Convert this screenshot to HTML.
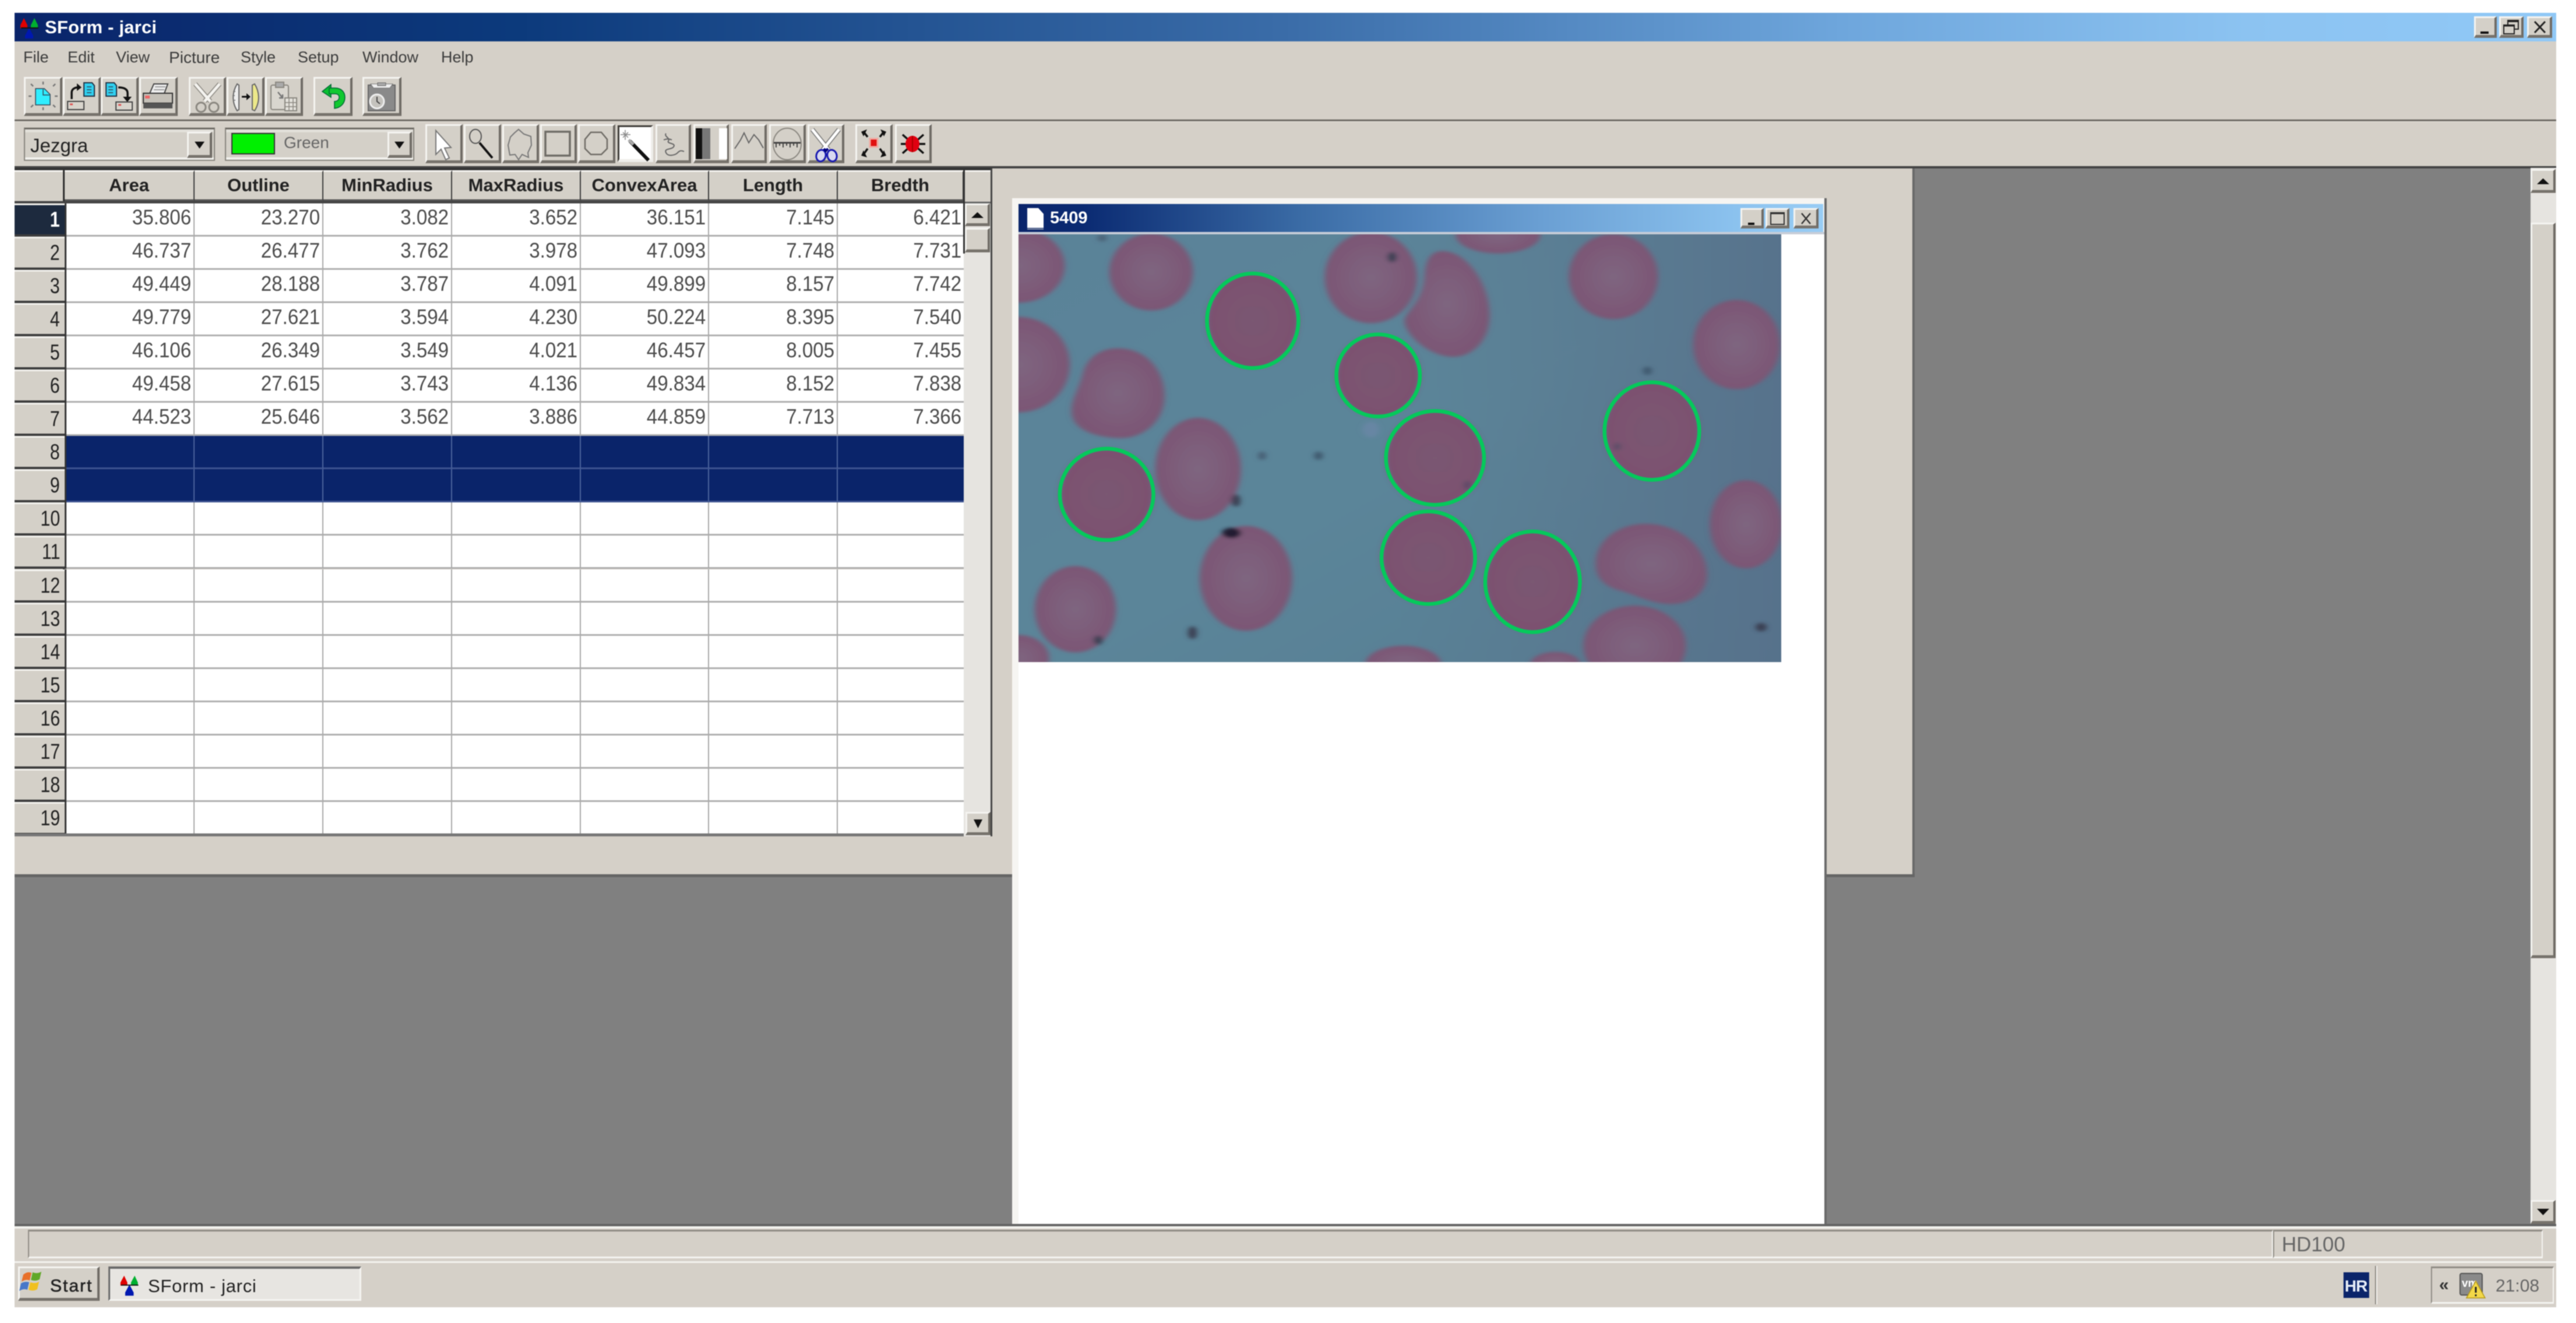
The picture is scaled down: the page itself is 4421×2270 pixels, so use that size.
<!DOCTYPE html>
<html><head><meta charset="utf-8"><title>SForm - jarci</title>
<style>
html,body{margin:0;padding:0;width:4421px;height:2270px;background:#fff;overflow:hidden}
#p{position:absolute;left:0;top:0;width:4421px;height:2270px;filter:blur(.9px);font-family:"Liberation Sans",sans-serif;overflow:hidden}
.a{position:absolute}
.t{position:absolute;white-space:nowrap;line-height:1}
.b{position:absolute;box-sizing:border-box;background:#d4d0c8;border:3px solid;border-color:#f5f4f1 #6f6b65 #77736c #f5f4f1;border-bottom-width:5px;border-right-width:4px}
.b svg{position:absolute;left:-3px;top:-3px;overflow:visible}
.r{position:absolute;left:25px;width:1629px;height:57px;display:flex}
.r b{box-sizing:border-box;width:86px;height:57px;background:#d4d0c8;border-top:3px solid #f3f2ee;border-bottom:4px solid #3d3d3d;font:400 37px/50px "Liberation Sans",sans-serif;text-align:right;padding-right:8px;color:#222}
.r b i{display:inline-block;font-style:normal;transform:scaleX(.82);transform-origin:right center}
.r u{box-sizing:border-box;width:3px;height:57px;background:#333;display:block}
.r span{box-sizing:border-box;display:block;height:57px;background:#fff;border-right:2px solid #a8a8a8;border-bottom:3px solid #afafaf;text-align:right;padding-right:4px;font:36px/47px "Liberation Sans",sans-serif;color:#4c4c4c;overflow:hidden;white-space:nowrap}
.r span i{display:inline-block;font-style:normal;transform:scaleX(.92);transform-origin:right center}
.r span:nth-of-type(1){width:220px}
.r span:nth-of-type(2),.r span:nth-of-type(3),.r span:nth-of-type(4){width:221px}
.r span:nth-of-type(5){width:220px}
.r span:nth-of-type(6){width:221px}
.r span:nth-of-type(7){width:216px;border-right:0}
.s span{background:#0a246a;border-right-color:#4b639c;border-bottom-color:#3d5390}
.h{position:absolute;top:292px;height:54px;box-sizing:border-box;background:#d4d0c8;border-top:3px solid #f3f2ee;border-right:2px solid #3c3c3c;border-bottom:4px solid #555;font:700 31px/46px "Liberation Sans",sans-serif;color:#222;text-align:center}
</style></head><body><div id="p">

<!-- main window -->
<div class="a" style="left:25px;top:22px;width:4362px;height:2221px;background:#d5d0c8"></div>
<div class="a" style="left:25px;top:22px;width:4362px;height:49px;background:linear-gradient(90deg,#0a246a 0%,#0c3a7c 20%,#3a6ca8 50%,#6ea6dc 72%,#8cc3f1 88%,#90c8f6 100%)"></div>
<svg class="a" style="left:32px;top:26px" width="40" height="42" viewBox="0 0 40 42"><path d="M9 5l6 12v6H3v-6z" fill="#e00000"/><path d="M27 5l6 12v6H21v-6z" fill="#00b030"/><path d="M18 22l7 13v5H11v-5z" fill="#0018b0"/><path d="M4 22h30" stroke="#111" stroke-width="2"/></svg>
<div class="t" style="left:77px;top:31px;font-size:31px;font-weight:700;color:#fff;letter-spacing:.2px">SForm - jarci</div>
<div class="b" style="left:4246px;top:28px;width:39px;height:37px"><svg width="39" height="37"><path d="M11 28h14" stroke="#111" stroke-width="4"/></svg></div>
<div class="b" style="left:4289px;top:28px;width:42px;height:37px"><svg width="42" height="37"><rect x="15" y="7" width="18" height="15" fill="none" stroke="#222" stroke-width="2"/><path d="M15 8h18" stroke="#222" stroke-width="4"/><rect x="8" y="15" width="18" height="15" fill="#d4d0c8" stroke="#222" stroke-width="2"/><path d="M8 16h18" stroke="#222" stroke-width="3"/></svg></div>
<div class="b" style="left:4337px;top:28px;width:43px;height:37px"><svg width="43" height="37"><path d="M13 9l18 19M31 9L13 28" stroke="#222" stroke-width="3"/></svg></div>

<!-- menu -->
<div class="t" style="left:40px;top:85px;font-size:27px;color:#3c3c3c">File</div>
<div class="t" style="left:116px;top:85px;font-size:27px;color:#3c3c3c">Edit</div>
<div class="t" style="left:199px;top:85px;font-size:27px;color:#3c3c3c">View</div>
<div class="t" style="left:290px;top:85px;font-size:28px;color:#3c3c3c">Picture</div>
<div class="t" style="left:413px;top:85px;font-size:27px;color:#3c3c3c">Style</div>
<div class="t" style="left:511px;top:85px;font-size:27px;color:#3c3c3c">Setup</div>
<div class="t" style="left:622px;top:85px;font-size:27px;color:#3c3c3c">Window</div>
<div class="t" style="left:757px;top:85px;font-size:27px;color:#3c3c3c">Help</div>

<!-- toolbar 1 -->
<div class="b" style="left:41px;top:132px;width:66px;height:67px"><svg width="66" height="67"><path d="M20 20h15l10 10v18H20z" fill="#30eeff" stroke="#345" stroke-width="1.500"/><path d="M33 21v10h11" fill="none" stroke="#345" stroke-width="1.500"/><path d="M33 8v5M33 52v5M12 12l4 4M54 12l-4 4M12 52l4-4M54 52l-4-4M8 33h5M53 33h5" stroke="#777" stroke-width="2.500"/></svg></div>
<div class="b" style="left:108px;top:132px;width:65px;height:67px"><svg width="65" height="67"><path d="M36 10h14l4 5v18H36z" fill="#30d0f0" stroke="#234" stroke-width="2"/><path d="M41 17h8M41 22h8M41 27h8" stroke="#345" stroke-width="1.500"/><path d="M15 38V27c0-6 5-9 11-9" fill="none" stroke="#111" stroke-width="3.500"/><path d="M24 11l8 7-8 6z" fill="#111"/><rect x="8" y="42" width="28" height="14" fill="#d8d4cc" stroke="#444" stroke-width="2"/><path d="M12 47h5" stroke="#d55" stroke-width="3"/></svg></div>
<div class="b" style="left:173px;top:132px;width:65px;height:67px"><svg width="65" height="67"><path d="M9 10h14l4 5v18H9z" fill="#30d0f0" stroke="#234" stroke-width="2"/><path d="M13 17h8M13 22h8M13 27h8" stroke="#345" stroke-width="1.500"/><path d="M30 18c10 0 16 3 16 10v8" fill="none" stroke="#111" stroke-width="3.500"/><path d="M38 34h15l-7.500 9z" fill="#111"/><rect x="26" y="43" width="28" height="14" fill="#d8d4cc" stroke="#444" stroke-width="2"/><path d="M30 48h5" stroke="#d55" stroke-width="3"/></svg></div>
<div class="b" style="left:239px;top:132px;width:66px;height:67px"><svg width="66" height="67"><path d="M18 28l7-16h24l-6 16z" fill="#eee" stroke="#444" stroke-width="2"/><path d="M27 17h18M25 22h18" stroke="#888" stroke-width="1.500"/><rect x="7" y="28" width="50" height="17" fill="#c4c0b8" stroke="#333" stroke-width="2"/><rect x="7" y="45" width="50" height="9" fill="#555"/><rect x="10" y="32" width="8" height="5" fill="#e66"/></svg></div>
<div class="b" style="left:324px;top:132px;width:64px;height:67px"><svg width="64" height="67"><path d="M11 12l26 30M53 12L27 42" stroke="#8a8780" stroke-width="8"/><path d="M11 12l26 30M53 12L27 42" stroke="#f4f3ef" stroke-width="5"/><ellipse cx="21" cy="52" rx="8" ry="8" fill="none" stroke="#8a8780" stroke-width="3"/><ellipse cx="43" cy="52" rx="8" ry="8" fill="none" stroke="#8a8780" stroke-width="3"/></svg></div>
<div class="b" style="left:389px;top:132px;width:65px;height:67px"><svg width="65" height="67"><path d="M18 12C10 25 8 42 18 58l3-2V14z" fill="#eee" stroke="#666" stroke-width="2"/><path d="M11 25h4M10 32h4M11 40h4" stroke="#777" stroke-width="1.500"/><path d="M48 12c8 13 10 30 0 46l-4-2V14z" fill="#ece88a" stroke="#666" stroke-width="2"/><path d="M26 34h10" stroke="#111" stroke-width="3"/><path d="M34 28l7 6-7 6z" fill="#111"/></svg></div>
<div class="b" style="left:455px;top:132px;width:65px;height:67px"><svg width="65" height="67"><rect x="10" y="14" width="30" height="42" rx="3" fill="#d9d6cf" stroke="#8a8780" stroke-width="2"/><rect x="18" y="9" width="14" height="9" fill="#aaa" stroke="#8a8780" stroke-width="2"/><path d="M22 26l8 10m0-6v6h-6" stroke="#777" stroke-width="2.500" fill="none"/><rect x="34" y="36" width="20" height="22" fill="#e4e2dc" stroke="#8a8780" stroke-width="2"/><path d="M41 36v22M48 36v22M34 44h20M34 51h20" stroke="#8a8780" stroke-width="1.500"/></svg></div>
<div class="b" style="left:538px;top:132px;width:67px;height:67px"><svg width="67" height="67"><path d="M30 13L15 25l15 10z" fill="#08c030" stroke="#063" stroke-width="1.500"/><path d="M27 19h10c11 0 17 7 17 16 0 11-8 18-18 19v-12c5 0 8-3 8-7 0-4-3-6-7-6H27z" fill="#10c830" stroke="#063" stroke-width="1.500"/></svg></div>
<div class="b" style="left:622px;top:132px;width:67px;height:67px"><svg width="67" height="67"><rect x="10" y="14" width="46" height="44" fill="#8a8a8a" stroke="#666" stroke-width="2"/><path d="M14 12h38l-5 7H19z" fill="#eee" stroke="#777"/><path d="M26 10h14v5H26z" fill="#aaa" stroke="#666"/><circle cx="25" cy="42" r="12" fill="#c4c2bd" stroke="#eee" stroke-width="3"/><path d="M25 34v8l5 4" stroke="#444" stroke-width="2" fill="none"/></svg></div>

<div class="a" style="left:25px;top:205px;width:4362px;height:3px;background:#6e6a64"></div>
<div class="a" style="left:25px;top:208px;width:4362px;height:1px;background:#e8e6e1"></div>

<!-- combos -->
<div class="a" style="left:41px;top:219px;width:328px;height:57px;box-sizing:border-box;border:2px solid #87847d;border-top:3px solid #6c6963;background:#d4d0c8;box-shadow:inset 0 5px 0 #e2e0da,inset 0 -4px 0 #f2f1ed"></div>
<div class="t" style="left:52px;top:233px;font-size:33px;color:#222">Jezgra</div>
<div class="b" style="left:321px;top:226px;width:43px;height:45px"><svg width="43" height="45"><path d="M13 17h17l-8.500 12z" fill="#111"/></svg></div>
<div class="a" style="left:386px;top:219px;width:325px;height:57px;box-sizing:border-box;border:2px solid #87847d;border-top:3px solid #6c6963;background:#d4d0c8;box-shadow:inset 0 5px 0 #e2e0da,inset 0 -4px 0 #f2f1ed"></div>
<div class="a" style="left:397px;top:228px;width:75px;height:37px;box-sizing:border-box;background:#00f000;border:2px solid #333"></div>
<div class="t" style="left:487px;top:231px;font-size:28px;color:#666">Green</div>
<div class="b" style="left:665px;top:226px;width:42px;height:45px"><svg width="42" height="45"><path d="M12 17h17l-8.500 12z" fill="#111"/></svg></div>

<!-- toolbar 2 -->
<div class="b" style="left:730px;top:213px;width:64px;height:67px"><svg width="64" height="67"><path d="M18 11v41l9-9 8 18 6-3-8-17 11-1z" fill="#fff" stroke="#777" stroke-width="2"/></svg></div>
<div class="b" style="left:796px;top:213px;width:64px;height:67px"><svg width="64" height="67"><ellipse cx="20" cy="21" rx="10" ry="12" fill="none" stroke="#555" stroke-width="2"/><path d="M27 32l22 26" stroke="#111" stroke-width="4"/></svg></div>
<div class="b" style="left:862px;top:213px;width:63px;height:67px"><svg width="63" height="67"><path d="M28 9l9 8 12 4 1 15-6 13 1 8-11-5-6 9-6-9-9 1-3-17 4-14 7-7z" fill="none" stroke="#777" stroke-width="2"/></svg></div>
<div class="b" style="left:927px;top:213px;width:63px;height:67px"><svg width="63" height="67"><rect x="9" y="13" width="42" height="41" fill="none" stroke="#6f6c66" stroke-width="3.500"/></svg></div>
<div class="b" style="left:992px;top:213px;width:64px;height:67px"><svg width="64" height="67"><path d="M22 14h18l10 12v16L40 52H22L12 42V26z" fill="none" stroke="#6f6c66" stroke-width="2.500"/></svg></div>
<div class="b" style="left:1060px;top:215px;width:61px;height:63px;background:#fff;border-color:#3e3b37 #efeeea #efeeea #3e3b37"><svg width="61" height="63"><path d="M9 12l9 9M18 12l-9 9M13 8v17M5 16h17" stroke="#888" stroke-width="1.500"/><path d="M21 27l32 33" stroke="#111" stroke-width="6"/><path d="M19 25l8 8" stroke="#aaa" stroke-width="5"/></svg></div>
<div class="b" style="left:1125px;top:213px;width:61px;height:67px"><svg width="61" height="67"><path d="M18 16c-4 5 8 8 4 13-3 5 14 3 9 10-3 5-17 2-13 10 3 7 16 5 21-1 3-3 6-3 10-1" fill="none" stroke="#666" stroke-width="2"/><path d="M14 27c5-2 10-2 14 0" stroke="#666" stroke-width="2" fill="none"/></svg></div>
<div class="b" style="left:1190px;top:213px;width:61px;height:67px"><svg width="61" height="67"><rect x="4" y="7" width="11" height="53" fill="#111"/><rect x="15" y="7" width="14" height="53" fill="#777"/><rect x="44" y="7" width="14" height="53" fill="#fff"/></svg></div>
<div class="b" style="left:1255px;top:213px;width:61px;height:67px"><svg width="61" height="67"><path d="M6 42l10-15 6-12 8 17 9-14 8 9 8 14" fill="none" stroke="#666" stroke-width="2"/></svg></div>
<div class="b" style="left:1320px;top:213px;width:63px;height:67px"><svg width="63" height="67"><ellipse cx="31" cy="34" rx="24" ry="27" fill="none" stroke="#8a8780" stroke-width="2"/><path d="M8 32h46" stroke="#444" stroke-width="3"/><path d="M12 32v8M18 32v5M24 32v8M30 32v5M36 32v8M42 32v5M48 32v8" stroke="#444" stroke-width="2"/></svg></div>
<div class="b" style="left:1386px;top:213px;width:63px;height:67px"><svg width="63" height="67"><path d="M8 9l28 35M54 9L26 44" stroke="#777" stroke-width="8"/><path d="M8 9l28 35M54 9L26 44" stroke="#fff" stroke-width="5"/><ellipse cx="23" cy="54" rx="8" ry="10" fill="#d8d8f0" stroke="#1818b0" stroke-width="3" transform="rotate(15 23 54)"/><ellipse cx="42" cy="54" rx="8" ry="10" fill="#d8d8f0" stroke="#1818b0" stroke-width="3" transform="rotate(-15 42 54)"/><path d="M28 42l3 4 4-4" stroke="#000080" stroke-width="4" fill="none"/></svg></div>
<div class="b" style="left:1468px;top:213px;width:64px;height:67px"><svg width="64" height="67"><rect x="25" y="25" width="13" height="14" fill="#e01010" stroke="#f0a8a0" stroke-width="3"/><path d="M21 22l-7-9M42 22l7-9M21 42l-7 10M42 42l7 10" stroke="#111" stroke-width="3.500"/><path d="M10 13l10-4-6 12zM53 13l-10-4 6 12zM10 54l10 3-6-12zM53 54l-10 3 6-12z" fill="#111"/></svg></div>
<div class="b" style="left:1536px;top:213px;width:63px;height:67px"><svg width="63" height="67"><path d="M13 18l36 32M49 18L13 50M10 34h42" stroke="#111" stroke-width="3.500"/><ellipse cx="30" cy="34" rx="12" ry="14" fill="#e00010"/><path d="M30 20v28" stroke="#a00" stroke-width="2"/></svg></div>

<!-- MDI client -->
<div class="a" style="left:25px;top:288px;width:4362px;height:1812px;background:#808080"></div>
<div class="a" style="left:25px;top:285px;width:4362px;height:4px;background:#444"></div>
<div class="a" style="left:25px;top:289px;width:3257px;height:1211px;background:#d5d0c8"></div>
<div class="a" style="left:3282px;top:289px;width:4px;height:1216px;background:#696969"></div>
<div class="a" style="left:25px;top:1500px;width:3261px;height:5px;background:#656565"></div>

<!-- MDI scrollbar -->
<div class="a" style="left:4343px;top:288px;width:44px;height:1812px;background:#e6e4e0"></div>
<div class="b" style="left:4343px;top:290px;width:43px;height:41px"><svg width="43" height="41"><path d="M11 26h21l-10.500-10z" fill="#111"/></svg></div>
<div class="b" style="left:4343px;top:382px;width:43px;height:1262px"></div>
<div class="b" style="left:4343px;top:2059px;width:43px;height:41px"><svg width="43" height="41"><path d="M11 15h21L21.500 26z" fill="#111"/></svg></div>

<!-- grid -->
<div class="a" style="left:25px;top:289px;width:1678px;height:146px;background:#d4d0c8"></div>
<div class="a" style="left:25px;top:288px;width:1678px;height:4px;background:#333"></div>
<div class="a" style="left:25px;top:292px;width:86px;height:54px;background:#d4d0c8;box-shadow:inset 0 3px 0 #f3f2ee"></div>
<div class="a" style="left:108px;top:292px;width:3px;height:1141px;background:#2b2b2b"></div>
<div class="h" style="left:111px;width:223px">Area</div>
<div class="h" style="left:334px;width:221px">Outline</div>
<div class="h" style="left:555px;width:221px">MinRadius</div>
<div class="h" style="left:776px;width:221px">MaxRadius</div>
<div class="h" style="left:997px;width:220px">ConvexArea</div>
<div class="h" style="left:1217px;width:221px">Length</div>
<div class="h" style="left:1438px;width:216px">Bredth</div>
<div class="a" style="left:25px;top:345px;width:1629px;height:4px;background:#444"></div>

<div class="r" style="top:349px"><b style="background:#1d2a3e;color:#fff;font-weight:700"><i>1</i></b><u></u><span><i>35.806</i></span><span><i>23.270</i></span><span><i>3.082</i></span><span><i>3.652</i></span><span><i>36.151</i></span><span><i>7.145</i></span><span><i>6.421</i></span></div>
<div class="r" style="top:406px"><b><i>2</i></b><u></u><span><i>46.737</i></span><span><i>26.477</i></span><span><i>3.762</i></span><span><i>3.978</i></span><span><i>47.093</i></span><span><i>7.748</i></span><span><i>7.731</i></span></div>
<div class="r" style="top:463px"><b><i>3</i></b><u></u><span><i>49.449</i></span><span><i>28.188</i></span><span><i>3.787</i></span><span><i>4.091</i></span><span><i>49.899</i></span><span><i>8.157</i></span><span><i>7.742</i></span></div>
<div class="r" style="top:520px"><b><i>4</i></b><u></u><span><i>49.779</i></span><span><i>27.621</i></span><span><i>3.594</i></span><span><i>4.230</i></span><span><i>50.224</i></span><span><i>8.395</i></span><span><i>7.540</i></span></div>
<div class="r" style="top:577px"><b><i>5</i></b><u></u><span><i>46.106</i></span><span><i>26.349</i></span><span><i>3.549</i></span><span><i>4.021</i></span><span><i>46.457</i></span><span><i>8.005</i></span><span><i>7.455</i></span></div>
<div class="r" style="top:634px"><b><i>6</i></b><u></u><span><i>49.458</i></span><span><i>27.615</i></span><span><i>3.743</i></span><span><i>4.136</i></span><span><i>49.834</i></span><span><i>8.152</i></span><span><i>7.838</i></span></div>
<div class="r" style="top:691px"><b><i>7</i></b><u></u><span><i>44.523</i></span><span><i>25.646</i></span><span><i>3.562</i></span><span><i>3.886</i></span><span><i>44.859</i></span><span><i>7.713</i></span><span><i>7.366</i></span></div>
<div class="r s" style="top:748px"><b><i>8</i></b><u></u><span></span><span></span><span></span><span></span><span></span><span></span><span></span></div>
<div class="r s" style="top:805px"><b><i>9</i></b><u></u><span></span><span></span><span></span><span></span><span></span><span></span><span></span></div>
<div class="r" style="top:862px"><b><i>10</i></b><u></u><span></span><span></span><span></span><span></span><span></span><span></span><span></span></div>
<div class="r" style="top:919px"><b><i>11</i></b><u></u><span></span><span></span><span></span><span></span><span></span><span></span><span></span></div>
<div class="r" style="top:977px"><b><i>12</i></b><u></u><span></span><span></span><span></span><span></span><span></span><span></span><span></span></div>
<div class="r" style="top:1034px"><b><i>13</i></b><u></u><span></span><span></span><span></span><span></span><span></span><span></span><span></span></div>
<div class="r" style="top:1091px"><b><i>14</i></b><u></u><span></span><span></span><span></span><span></span><span></span><span></span><span></span></div>
<div class="r" style="top:1148px"><b><i>15</i></b><u></u><span></span><span></span><span></span><span></span><span></span><span></span><span></span></div>
<div class="r" style="top:1205px"><b><i>16</i></b><u></u><span></span><span></span><span></span><span></span><span></span><span></span><span></span></div>
<div class="r" style="top:1262px"><b><i>17</i></b><u></u><span></span><span></span><span></span><span></span><span></span><span></span><span></span></div>
<div class="r" style="top:1319px"><b><i>18</i></b><u></u><span></span><span></span><span></span><span></span><span></span><span></span><span></span></div>
<div class="r" style="top:1376px"><b><i>19</i></b><u></u><span></span><span></span><span></span><span></span><span></span><span></span><span></span></div>
<div class="a" style="left:25px;top:1430px;width:1678px;height:5px;background:#777"></div>

<!-- grid scrollbar -->
<div class="a" style="left:1654px;top:292px;width:49px;height:1143px;background:#e6e4e0"></div>
<div class="a" style="left:1654px;top:292px;width:49px;height:54px;background:#d4d0c8;box-shadow:inset 0 3px 0 #f3f2ee"></div>
<div class="a" style="left:1654px;top:346px;width:49px;height:3px;background:#666"></div>
<div class="a" style="left:1653px;top:289px;width:3px;height:146px;background:#333"></div>
<div class="a" style="left:1700px;top:289px;width:3px;height:1146px;background:#444"></div>
<div class="b" style="left:1656px;top:349px;width:43px;height:39px"><svg width="43" height="39"><path d="M11 25h21L21.500 15z" fill="#111"/></svg></div>
<div class="b" style="left:1656px;top:391px;width:43px;height:42px"></div>
<div class="b" style="left:1657px;top:1393px;width:43px;height:40px"><svg width="43" height="40"><path d="M14 13h15L21.500 28z" fill="#111"/></svg></div>

<!-- child window 5409 -->
<div class="a" style="left:1737px;top:340px;width:1398px;height:1760px;background:#f6f5f2"></div>
<div class="a" style="left:3131px;top:340px;width:4px;height:1760px;background:#6a6a6a"></div>
<div class="a" style="left:1748px;top:402px;width:1383px;height:1698px;background:#fff"></div>
<div class="a" style="left:1748px;top:350px;width:1381px;height:48px;background:linear-gradient(90deg,#0a246a 0%,#0a2a72 8%,#3a6ba5 35%,#6a9fd3 65%,#8cc3ef 90%,#98ccf4 100%)"></div>
<div class="a" style="left:1748px;top:398px;width:1383px;height:4px;background:#c7cdd8"></div>
<svg class="a" style="left:1760px;top:355px" width="34" height="40"><path d="M3 2h19l9 10v24H3z" fill="#fff"/><path d="M3 38h28" stroke="#8a93a8" stroke-width="2"/></svg>
<div class="t" style="left:1802px;top:360px;font-size:29px;font-weight:700;color:#fff">5409</div>
<div class="b" style="left:2987px;top:357px;width:40px;height:35px"><svg width="40" height="35"><path d="M13 27h11" stroke="#111" stroke-width="4"/></svg></div>
<div class="b" style="left:3030px;top:357px;width:41px;height:35px"><svg width="41" height="35"><rect x="9" y="8" width="23" height="20" fill="none" stroke="#333" stroke-width="2"/><path d="M9 9h23" stroke="#333" stroke-width="3"/></svg></div>
<div class="b" style="left:3078px;top:357px;width:43px;height:35px"><svg width="43" height="35"><path d="M14 9l15 18M29 9L14 27" stroke="#333" stroke-width="2.500"/></svg></div>

<!-- microscope image -->
<svg class="a" style="left:1748px;top:402px" width="1309" height="734" viewBox="50 118 1368 1385" preserveAspectRatio="none">
<defs>
<linearGradient id="bg" x1="0" y1="0" x2="1" y2="1"><stop offset="0" stop-color="#5a8298"/><stop offset=".5" stop-color="#5b8599"/><stop offset="1" stop-color="#567c92"/></linearGradient>
<linearGradient id="bg2" x1="0" y1="0" x2="1" y2="0"><stop offset=".5" stop-color="#5c758c" stop-opacity="0"/><stop offset="1" stop-color="#56708a" stop-opacity=".9"/></linearGradient>
<radialGradient id="c"><stop offset="0" stop-color="#7e6680"/><stop offset=".7" stop-color="#7d5a78"/><stop offset="1" stop-color="#7a5675"/></radialGradient>
<radialGradient id="d"><stop offset="0" stop-color="#7a5872"/><stop offset="1" stop-color="#7b5070"/></radialGradient>
<filter id="f" x="-10%" y="-10%" width="120%" height="120%"><feGaussianBlur stdDeviation="5"/></filter>
</defs>
<rect x="50" y="118" width="1368" height="1385" fill="url(#bg)"/>
<rect x="50" y="118" width="1368" height="1385" fill="url(#bg2)"/>
<g filter="url(#f)">
<g fill="url(#c)">
<ellipse cx="50" cy="220" rx="83" ry="120"/>
<ellipse cx="288" cy="240" rx="75" ry="125"/>
<ellipse cx="50" cy="540" rx="92" ry="155"/>
<path d="M228 487C285 487 312 570 312 640C312 730 270 778 235 778C200 778 145 760 145 690C145 650 158 620 165 570C172 520 195 487 228 487Z"/>
<ellipse cx="372" cy="878" rx="77" ry="166"/>
<ellipse cx="682" cy="258" rx="83" ry="148"/>
<path d="M810 172C855 172 895 280 895 380C895 470 860 515 830 515C790 515 745 450 742 400C742 370 775 340 778 250C780 200 790 172 810 172Z"/>
<ellipse cx="910" cy="120" rx="76" ry="60"/>
<ellipse cx="1117" cy="255" rx="80" ry="138"/>
<ellipse cx="1338" cy="475" rx="78" ry="145"/>
<ellipse cx="1355" cy="1057" rx="65" ry="143"/>
<path d="M1175 1055C1235 1055 1285 1130 1285 1220C1285 1280 1255 1318 1215 1315C1180 1312 1150 1280 1125 1270C1100 1255 1085 1230 1085 1185C1085 1110 1125 1055 1175 1055Z"/>
<ellipse cx="1155" cy="1450" rx="92" ry="130"/>
<ellipse cx="458" cy="1232" rx="83" ry="170"/>
<ellipse cx="152" cy="1332" rx="73" ry="140"/>
<ellipse cx="50" cy="1490" rx="55" ry="75"/>
<ellipse cx="740" cy="1510" rx="68" ry="60"/>
<ellipse cx="1013" cy="1510" rx="45" ry="40"/>
</g>
<g fill="url(#d)">
<ellipse cx="470" cy="398" rx="82" ry="153"/>
<ellipse cx="695" cy="575" rx="75" ry="133"/>
<ellipse cx="797" cy="842" rx="88" ry="152"/>
<ellipse cx="1186" cy="755" rx="85" ry="158"/>
<ellipse cx="208" cy="960" rx="84" ry="148"/>
<ellipse cx="785" cy="1165" rx="84" ry="150"/>
<ellipse cx="972" cy="1243" rx="85" ry="163"/>
</g>
<g fill="#3a3f52">
<ellipse cx="720" cy="192" rx="8" ry="17"/>
<ellipse cx="200" cy="130" rx="8" ry="12" fill="#4b6478"/>
<ellipse cx="1178" cy="560" rx="8" ry="14" fill="#3f5a70"/>
<ellipse cx="487" cy="835" rx="7" ry="14" fill="#465f74"/>
<ellipse cx="588" cy="835" rx="8" ry="14" fill="#405a6e"/>
<ellipse cx="440" cy="980" rx="8" ry="20"/>
<ellipse cx="432" cy="1085" rx="17" ry="17" fill="#241c30"/>
<ellipse cx="362" cy="1408" rx="8" ry="21"/>
<ellipse cx="193" cy="1432" rx="8" ry="15"/>
<ellipse cx="1382" cy="1390" rx="10" ry="14"/>
<ellipse cx="855" cy="930" rx="6" ry="14" fill="#5a4a66"/>
<ellipse cx="682" cy="750" rx="15" ry="26" fill="#6c86a8" opacity=".7"/>
<ellipse cx="1124" cy="805" rx="6" ry="12" fill="#5a5068"/>
</g>
</g>
<g fill="none" stroke="#05c95b" stroke-width="6.500">
<ellipse cx="470" cy="398" rx="82" ry="153" vector-effect="non-scaling-stroke"/>
<ellipse cx="695" cy="575" rx="75" ry="133" vector-effect="non-scaling-stroke"/>
<ellipse cx="797" cy="842" rx="88" ry="152" vector-effect="non-scaling-stroke"/>
<ellipse cx="1186" cy="755" rx="85" ry="158" vector-effect="non-scaling-stroke"/>
<ellipse cx="208" cy="960" rx="84" ry="148" vector-effect="non-scaling-stroke"/>
<ellipse cx="785" cy="1165" rx="84" ry="150" vector-effect="non-scaling-stroke"/>
<ellipse cx="972" cy="1243" rx="85" ry="163" vector-effect="non-scaling-stroke"/>
</g>
</svg>

<!-- status bar -->
<div class="a" style="left:25px;top:2100px;width:4362px;height:4px;background:#646464"></div>
<div class="a" style="left:25px;top:2104px;width:4362px;height:4px;background:#f3f2ee"></div>
<div class="a" style="left:48px;top:2110px;width:3853px;height:49px;box-sizing:border-box;border-top:3px solid #8f8b84;border-left:2px solid #8f8b84;border-bottom:3px solid #f5f4f1;border-right:2px solid #f5f4f1"></div>
<div class="a" style="left:3901px;top:2110px;width:463px;height:49px;box-sizing:border-box;border-top:3px solid #8f8b84;border-left:2px solid #8f8b84;border-bottom:3px solid #f5f4f1;border-right:2px solid #f5f4f1"></div>
<div class="t" style="left:3916px;top:2118px;font-size:35px;color:#666">HD100</div>
<div class="a" style="left:25px;top:2164px;width:4362px;height:3px;background:#f3f2ee"></div>

<!-- taskbar -->
<div class="b" style="left:31px;top:2173px;width:140px;height:59px"><svg width="140" height="59"><path d="M9 14c5-4 9-5 14-3l-3 13c-5-2-9-1-14 2z" fill="#e8702a"/><path d="M25 10c5 2 9 2 15-1l-3 13c-5 3-10 3-15 1z" fill="#60a828"/><path d="M5 29c5-3 9-3 14-2l-3 13c-5-2-9-1-14 2z" fill="#4878c8"/><path d="M21 27c5 2 10 2 15-1l-3 13c-5 3-10 3-15 1z" fill="#f0c020"/></svg></div>
<div class="t" style="left:86px;top:2192px;font-size:30px;color:#222;letter-spacing:2px;-webkit-text-stroke:.6px #222">Start</div>
<div class="a" style="left:186px;top:2173px;width:434px;height:59px;box-sizing:border-box;background:#e7e5e1;border:3px solid;border-color:#6a6a6a #f5f4f1 #f5f4f1 #6a6a6a;border-top-width:4px"></div>
<svg class="a" style="left:204px;top:2186px" width="38" height="38" viewBox="0 0 40 42"><path d="M9 3l6 13v6H2v-6z" fill="#e00000"/><path d="M29 3l6 13v6H22v-6z" fill="#00b030"/><path d="M19 20l8 15v6H11v-6z" fill="#0018b0"/><path d="M3 21h33" stroke="#111" stroke-width="2"/></svg>
<div class="t" style="left:254px;top:2191px;font-size:31px;color:#222;letter-spacing:.7px">SForm - jarci</div>
<div class="a" style="left:4022px;top:2183px;width:44px;height:44px;background:#0a246a"></div>
<div class="t" style="left:4024px;top:2193px;font-size:28px;font-weight:700;color:#e8eef8;letter-spacing:-1px">HR</div>
<div class="a" style="left:4076px;top:2172px;width:2px;height:66px;background:#8f8b84"></div>
<div class="a" style="left:4078px;top:2172px;width:2px;height:66px;background:#f5f4f1"></div>
<div class="a" style="left:4172px;top:2173px;width:211px;height:64px;box-sizing:border-box;border:2px solid;border-color:#8f8b84 #f5f4f1 #f5f4f1 #8f8b84;border-top-width:3px;border-bottom-width:3px"></div>
<div class="t" style="left:4186px;top:2190px;font-size:30px;font-weight:700;color:#333">&#171;</div>
<svg class="a" style="left:4221px;top:2184px" width="46" height="44"><rect x="1" y="1" width="38" height="37" rx="3" fill="#8a8a8a" stroke="#555" stroke-width="2"/><text x="4" y="24" font-family="Liberation Sans" font-size="19" font-weight="700" fill="#fff">vm</text><path d="M28 14l16 29H12z" fill="#f2d848" stroke="#b59818" stroke-width="1.500"/><path d="M28 24v10M28 37v3" stroke="#222" stroke-width="3"/></svg>
<div class="t" style="left:4283px;top:2192px;font-size:30px;color:#666">21:08</div>

</div></body></html>
